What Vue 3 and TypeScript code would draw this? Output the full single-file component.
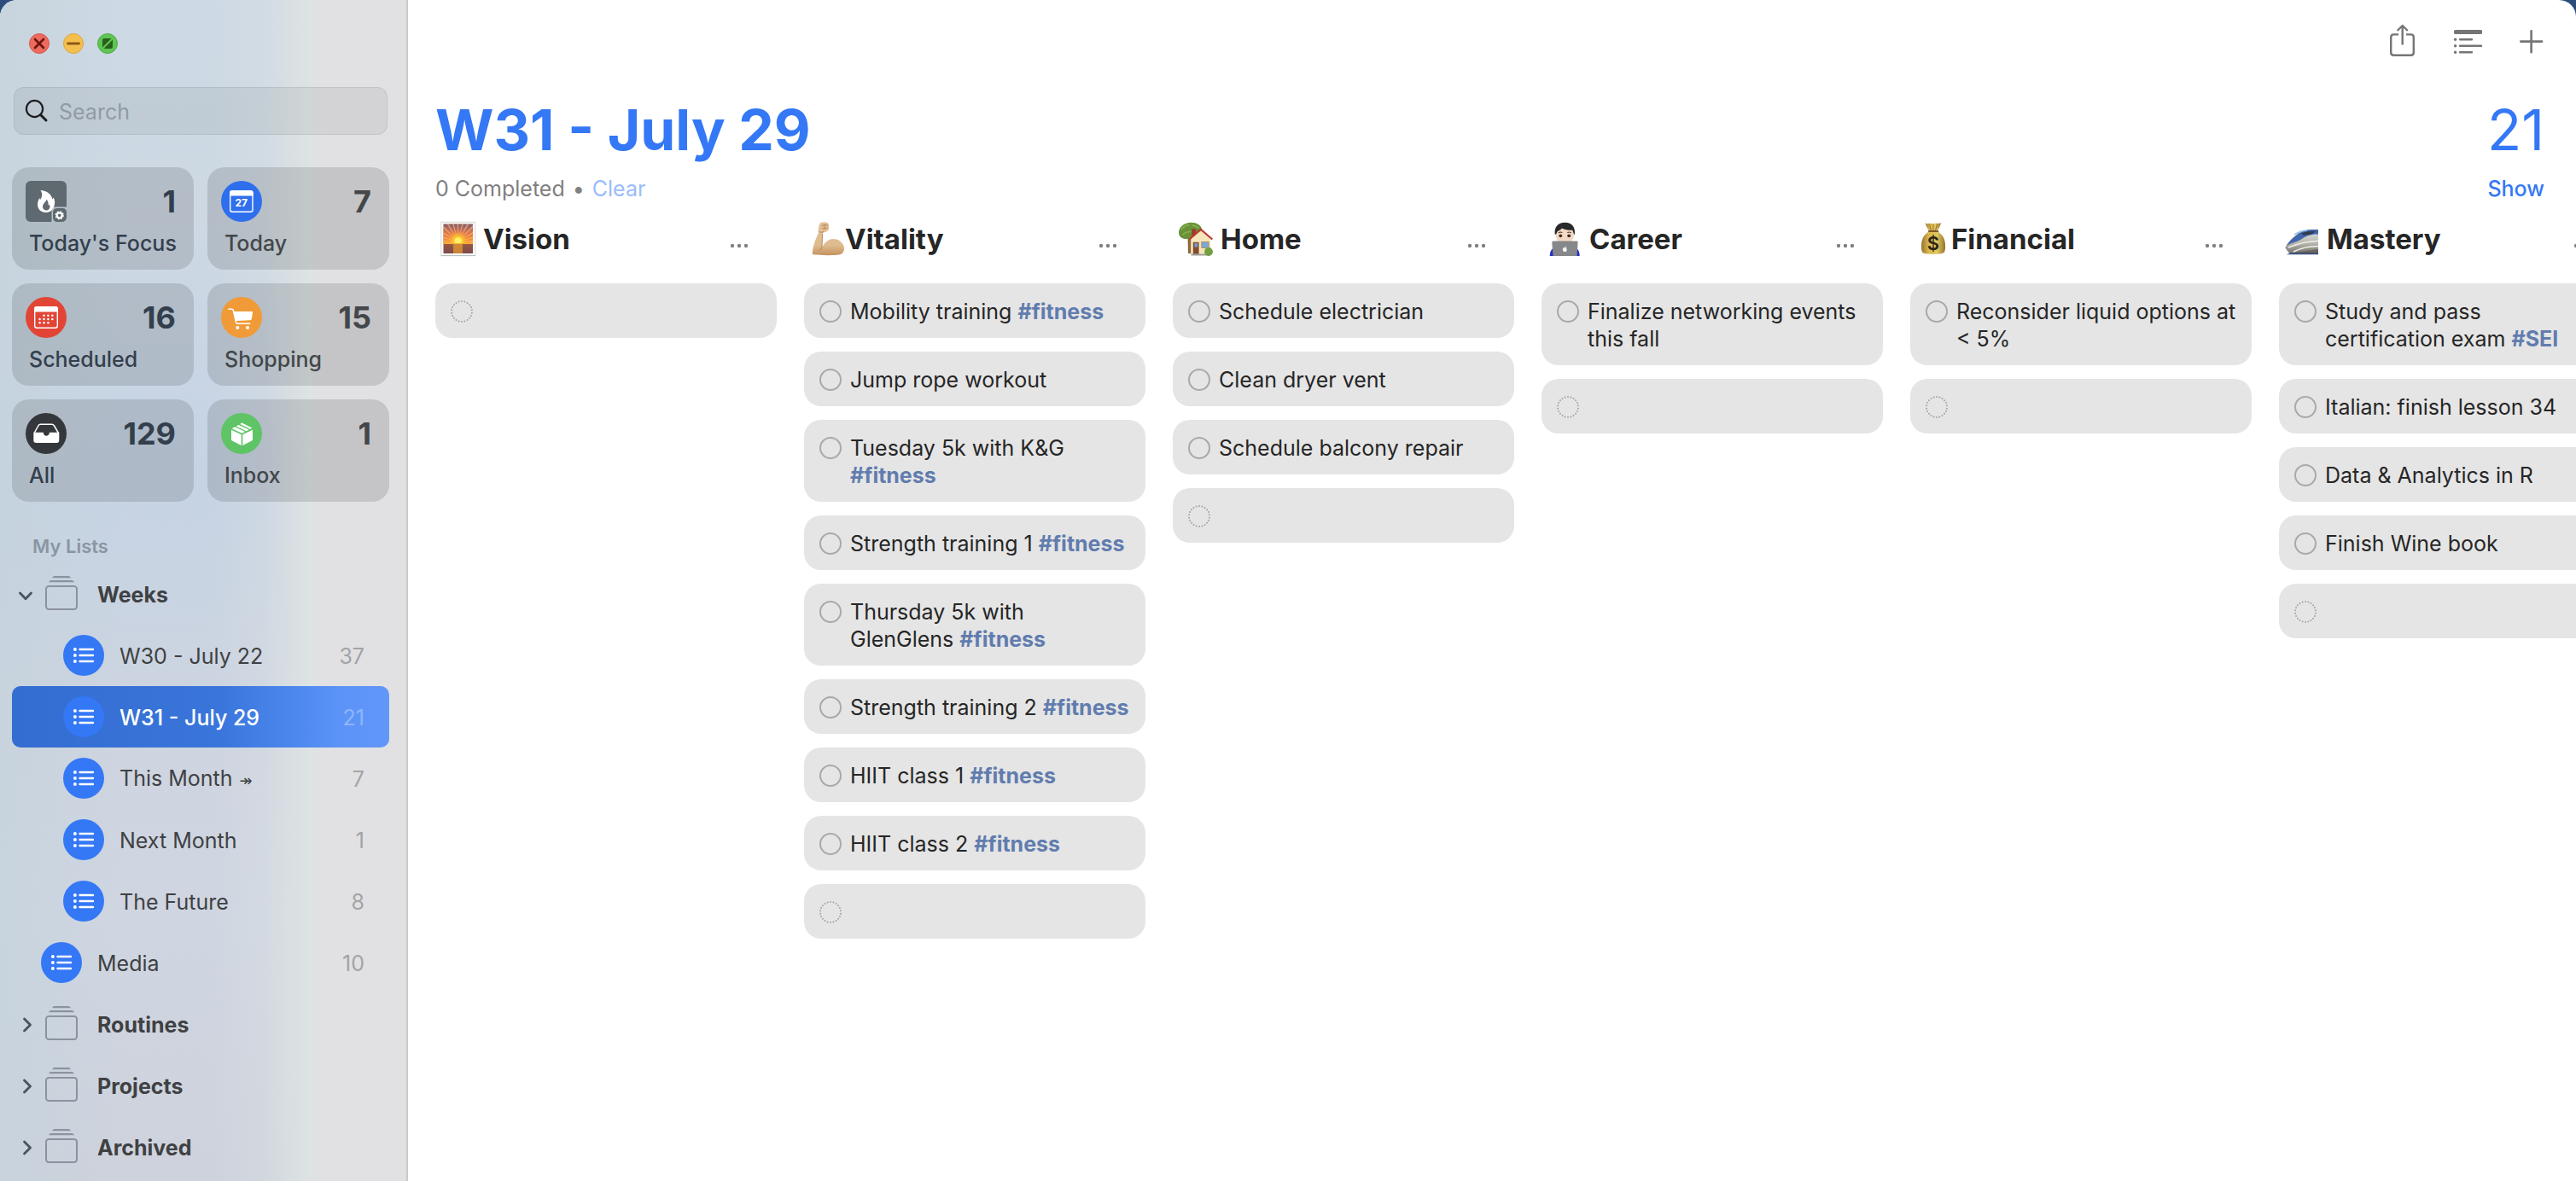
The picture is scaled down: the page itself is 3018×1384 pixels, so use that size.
<script setup lang="ts">
import { ref } from 'vue'

interface Tile {
  id: string
  label: string
  count: number
}

interface ListRow {
  kind: 'group' | 'list'
  label: string
  mark?: string
  count?: number
  nested?: boolean
  open?: boolean
}

interface Task {
  text: string
  tag?: string
}

interface Column {
  id: string
  title: string
  spaced: boolean
  tasks: Task[]
}

const search = ref('')
const selected = ref('W31 - July 29')

const tiles: Tile[] = [
  { id: 'focus', label: "Today's Focus", count: 1 },
  { id: 'today', label: 'Today', count: 7 },
  { id: 'scheduled', label: 'Scheduled', count: 16 },
  { id: 'shopping', label: 'Shopping', count: 15 },
  { id: 'all', label: 'All', count: 129 },
  { id: 'inbox', label: 'Inbox', count: 1 },
]

const rows: ListRow[] = [
  { kind: 'group', label: 'Weeks', open: true },
  { kind: 'list', label: 'W30 - July 22', count: 37, nested: true },
  { kind: 'list', label: 'W31 - July 29', count: 21, nested: true },
  { kind: 'list', label: 'This Month', mark: '↠', count: 7, nested: true },
  { kind: 'list', label: 'Next Month', count: 1, nested: true },
  { kind: 'list', label: 'The Future', count: 8, nested: true },
  { kind: 'list', label: 'Media', count: 10 },
  { kind: 'group', label: 'Routines' },
  { kind: 'group', label: 'Projects' },
  { kind: 'group', label: 'Archived' },
]

const columns: Column[] = [
  { id: 'vision', title: 'Vision', spaced: true, tasks: [] },
  {
    id: 'vitality',
    title: 'Vitality',
    spaced: false,
    tasks: [
      { text: 'Mobility training', tag: '#fitness' },
      { text: 'Jump rope workout' },
      { text: 'Tuesday 5k with K&G', tag: '#fitness' },
      { text: 'Strength training 1', tag: '#fitness' },
      { text: 'Thursday 5k with GlenGlens', tag: '#fitness' },
      { text: 'Strength training 2', tag: '#fitness' },
      { text: 'HIIT class 1', tag: '#fitness' },
      { text: 'HIIT class 2', tag: '#fitness' },
    ],
  },
  {
    id: 'home',
    title: 'Home',
    spaced: true,
    tasks: [
      { text: 'Schedule electrician' },
      { text: 'Clean dryer vent' },
      { text: 'Schedule balcony repair' },
    ],
  },
  { id: 'career', title: 'Career', spaced: true, tasks: [{ text: 'Finalize networking events this fall' }] },
  { id: 'financial', title: 'Financial', spaced: false, tasks: [{ text: 'Reconsider liquid options at < 5%' }] },
  {
    id: 'mastery',
    title: 'Mastery',
    spaced: true,
    tasks: [
      { text: 'Study and pass certification exam', tag: '#SEI' },
      { text: 'Italian: finish lesson 34' },
      { text: 'Data & Analytics in R' },
      { text: 'Finish Wine book' },
    ],
  },
]

// Dots of the ring that marks a blank reminder
const ringDots = Array.from({ length: 22 }, (_, i) => {
  const a = (i / 22) * Math.PI * 2
  return { x: 13 + 12 * Math.sin(a), y: 13 - 12 * Math.cos(a) }
})

// Day marks in the Scheduled calendar: the first week starts late, the last ends early
const dayDots = [
  [21.5, 21.7], [26.4, 21.7], [31.3, 21.7],
  [16.6, 26], [21.5, 26], [26.4, 26], [31.3, 26],
  [16.6, 30.3], [21.5, 30.3], [26.4, 30.3],
]

const rays = Array.from({ length: 13 }, (_, i) => {
  const a = Math.PI + (i / 12) * Math.PI
  return {
    d: `M20.5 24 L${20.5 + 40 * Math.cos(a - 0.04)} ${24 + 40 * Math.sin(a - 0.04)} L${20.5 + 40 * Math.cos(a + 0.04)} ${24 + 40 * Math.sin(a + 0.04)}Z`,
  }
})
</script>

<template>
  <div class="window">
    <aside class="sidebar">
      <div class="lights">
        <button type="button" aria-label="Close">
          <svg viewBox="0 0 24 24"><circle cx="12" cy="12" r="11.5" fill="#ed6a5f" stroke="#d9564a" /><path d="M7 7l10 10M17 7L7 17" stroke="#6d150d" stroke-width="2.6" stroke-linecap="round" /></svg>
        </button>
        <button type="button" aria-label="Minimize">
          <svg viewBox="0 0 24 24"><circle cx="12" cy="12" r="11.5" fill="#f5bf4f" stroke="#dba63b" /><path d="M5.500 12h13" stroke="#8f5a16" stroke-width="2.8" stroke-linecap="round" /></svg>
        </button>
        <button type="button" aria-label="Zoom">
          <svg viewBox="0 0 24 24"><circle cx="12" cy="12" r="11.500" fill="#61c554" stroke="#50ad43" /><path d="M6 16.500V8q0-2 2-2h8.500zM18 7.500V16q0 2-2 2H7.500z" fill="#285f1d" /></svg>
        </button>
      </div>

      <label class="search">
        <svg viewBox="0 0 28 28" aria-hidden="true"><circle cx="11.500" cy="11.500" r="9.600" fill="none" stroke="#1d1d1f" stroke-width="2.200" /><path d="M18.500 18.500l6.500 6.500" stroke="#1d1d1f" stroke-width="3" stroke-linecap="round" /></svg>
        <input v-model="search" type="search" placeholder="Search" aria-label="Search" />
      </label>

      <nav class="tiles" aria-label="Smart lists">
        <button v-for="t in tiles" :key="t.id" type="button" class="tile">
          <span class="tile-top">
            <svg v-if="t.id === 'focus'" viewBox="0 0 48 48">
              <rect width="48" height="48" rx="6" fill="#5f6970" />
              <path d="M17.500 11c7 .3 12.500 4.500 14 10.500.6-.6.900-1.300 1-2.200 2 3 2 7 1 10.200C32 34.500 28 37 23.800 37 17.500 37 14 32.500 14 27.500c0-3 1.200-5 2.200-7.500.6.800.7 1.500.8 2.200 2-3.200 3.500-6.700.5-11.200z" fill="#fff" />
              <path d="M24.500 21.500c0 2.500-4.500 5-4.500 9 0 2.300 2 4 4.200 4s4.300-1.500 4.300-4.200c0-1.300-.4-2-.9-2.800-.3.600-.6 1-1.100 1.200.5-2.700-.2-5-2-7.200z" fill="#5f6970" />
              <path d="M30.500 48V36q0-5.500 5.500-5.500h12V48z" fill="#b7c2cd" />
              <path d="M32 42v-5q0-5 5-5h6q5 0 5 5v5q0 6-6 6h-5q-5 0-5-6z" fill="#5f6970" />
              <circle cx="39.700" cy="40.300" r="3" fill="none" stroke="#fff" stroke-width="2.200" />
              <circle cx="39.700" cy="40.300" r="4.400" fill="none" stroke="#fff" stroke-width="1.600" stroke-dasharray="1.800 1.656" />
            </svg>
            <svg v-else-if="t.id === 'today'" viewBox="0 0 48 48">
              <circle cx="24" cy="24" r="24" fill="#2f6fee" />
              <rect x="10.700" y="12" width="26.300" height="24.300" rx="2.500" fill="none" stroke="#fff" stroke-width="1.400" />
              <path d="M10 17.500V14q0-3 3-3h21.700q3 0 3 3v3.500z" fill="#fff" />
              <text x="23.800" y="30" text-anchor="middle" font-size="12" font-weight="700" fill="#fff">27</text>
            </svg>
            <svg v-else-if="t.id === 'scheduled'" viewBox="0 0 48 48">
              <circle cx="24" cy="24" r="24" fill="#e24536" />
              <rect x="10.700" y="12" width="26.600" height="24.300" rx="2.500" fill="none" stroke="#fff" stroke-width="1.400" />
              <path d="M10 17.500V14q0-3 3-3h22q3 0 3 3v3.500z" fill="#fff" />
              <circle v-for="(d, i) in dayDots" :key="i" :cx="d[0]" :cy="d[1]" r="1.300" fill="#fff" />
            </svg>
            <svg v-else-if="t.id === 'shopping'" viewBox="0 0 48 48">
              <circle cx="24" cy="24" r="24" fill="#f19a38" />
              <path d="M8.800 14.300h4q1.200 0 1.500 1.300l3.200 14q.3 1.600 1.900 1.600h14.400" fill="none" stroke="#fff" stroke-width="1.600" stroke-linecap="round" stroke-linejoin="round" />
              <path d="M14.800 17h21.400q1 0 .9 1l-1.200 7.500q-.3 1.700-2 1.800l-16.500.8z" fill="#fff" />
              <circle cx="19.300" cy="36" r="2.100" fill="#fff" /><circle cx="31" cy="36" r="2.100" fill="#fff" />
            </svg>
            <svg v-else-if="t.id === 'all'" viewBox="0 0 48 48">
              <circle cx="24" cy="24" r="24" fill="#34373b" />
              <path d="M10.100 23.500l5-9q.7-1.300 2.200-1.300h13.600q1.500 0 2.300 1.300l5.300 9" fill="none" stroke="#fff" stroke-width="1.500" stroke-linejoin="round" />
              <path d="M9.300 22.800h11.500c.2 2.600 1.500 4 3.500 4s3.400-1.400 3.600-4h11.400V32q0 3-3 3h-24q-3 0-3-3z" fill="#fff" />
            </svg>
            <svg v-else viewBox="0 0 48 48">
              <circle cx="24" cy="24" r="24" fill="#5fc466" />
              <path d="M12 19.800l11.700 5.400V38L13 32.500q-1-.5-1-1.600zM37 19.800l-11.700 5.400V38L36 32.500q1-.5 1-1.600z" fill="#fff" />
              <path d="M12.500 18.300l3.800-2 11.800 5.600-3.600 1.800zM17.700 15.500l3-1.600 12 5.600-3.200 1.700zM22.200 13l2.300-1.500L36.500 17.700l-2.400 1.100z" fill="#fff" />
            </svg>
            <strong>{{ t.count }}</strong>
          </span>
          <span class="tile-label">{{ t.label }}</span>
        </button>
      </nav>

      <h2 class="lists-title">My Lists</h2>
      <ul class="lists">
        <li v-for="r in rows" :key="r.label">
          <a
            href="#"
            class="row"
            :class="{ nested: r.nested, group: r.kind === 'group', selected: r.label === selected }"
            @click.prevent="selected = r.label"
          >
            <span class="chevron">
              <svg v-if="r.kind === 'group'" viewBox="0 0 20 20" aria-hidden="true">
                <path v-if="r.open" d="M3.500 9l6.500 6.700L16.500 9" />
                <path v-else d="M8.500 4l7 7-7 7" />
              </svg>
            </span>
            <svg v-if="r.kind === 'group'" class="row-icon" viewBox="0 0 48 48" aria-hidden="true">
              <rect x="6" y="15" width="36" height="27" rx="3.200" fill="none" stroke="#8b939f" stroke-width="2" />
              <path d="M9 10.200q1-2.200 3-2.200h24q2 0 3 2.200zM13 5.200q1-2.200 3-2.200h16q2 0 3 2.200z" fill="#8b939f" />
            </svg>
            <svg v-else class="row-icon" viewBox="0 0 48 48" aria-hidden="true">
              <circle cx="24" cy="24" r="24" fill="#3478f6" />
              <path d="M19.500 17h15.500M19.500 24h15.500M19.500 31h15.500" stroke="#fff" stroke-width="2.400" stroke-linecap="round" />
              <g fill="#fff"><circle cx="13.900" cy="17" r="2" /><circle cx="13.900" cy="24" r="2" /><circle cx="13.900" cy="31" r="2" /></g>
            </svg>
            <span class="row-label">{{ r.label }}<small v-if="r.mark">{{ r.mark }}</small></span>
            <span class="row-count">{{ r.count }}</span>
          </a>
        </li>
      </ul>
    </aside>

    <main class="main">
      <div class="toolbar">
        <button type="button" aria-label="Share">
          <svg viewBox="0 0 36 40"><path d="M13 12.400H7.500q-3.300 0-3.300 3.300v17.700q0 3.300 3.300 3.300h20q3.300 0 3.300-3.300V15.700q0-3.300-3.300-3.300H22M17.700 2.500v22M11.600 8l6.100-6 6.100 6" fill="none" stroke="#757575" stroke-width="2.400" stroke-linejoin="round" /></svg>
        </button>
        <button type="button" aria-label="View options">
          <svg viewBox="0 0 36 40"><rect x="2" y="7" width="33" height="5" rx="1.500" fill="#757575" /><path d="M9 18.300h14M9 25.700h25M9 33.300h14" stroke="#757575" stroke-width="2.400" stroke-linecap="round" /><g fill="#757575"><circle cx="3.600" cy="18.300" r="1.700" /><circle cx="3.600" cy="25.700" r="1.700" /><circle cx="3.600" cy="33.300" r="1.700" /></g></svg>
        </button>
        <button type="button" aria-label="New reminder">
          <svg viewBox="0 0 36 40"><path d="M16.600 8.200v25M4.300 20.600h24.800" stroke="#757575" stroke-width="2.600" stroke-linecap="round" /></svg>
        </button>
      </div>

      <header class="header">
        <div class="title-line">
          <h1>W31 - July 29</h1>
          <span class="total">21</span>
        </div>
        <div class="status-line">
          <span>0 Completed</span><span class="bullet">•</span><button type="button" class="clear">Clear</button>
          <button type="button" class="show">Show</button>
        </div>
      </header>

      <div class="board">
        <section v-for="c in columns" :key="c.id" class="column">
          <div class="column-head" :class="{ spaced: c.spaced }">
            <svg v-if="c.id === 'vision'" class="emoji" viewBox="0 0 42 42" aria-hidden="true">
              <defs>
                <linearGradient id="sky" x1="0" y1="0" x2="0" y2="1"><stop offset="0" stop-color="#7c5c74" /><stop offset=".45" stop-color="#e0764a" /><stop offset="1" stop-color="#fba02e" /></linearGradient>
                <linearGradient id="sea" x1="0" y1="0" x2="0" y2="1"><stop offset="0" stop-color="#c8742c" /><stop offset="1" stop-color="#7d4a4b" /></linearGradient>
                <radialGradient id="glow"><stop offset="0" stop-color="#fff7a0" /><stop offset=".35" stop-color="#ffd530" /><stop offset="1" stop-color="#ffa52e" stop-opacity="0" /></radialGradient>
                <clipPath id="skyclip"><rect x="3.500" y="3.500" width="34.500" height="23" /></clipPath>
              </defs>
              <rect x=".8" y="1.300" width="40" height="39.400" fill="#fff" stroke="#d0d9d9" stroke-width="1" />
              <path d="M.8 40.500h40.300" stroke="#b4c0bf" stroke-width="1" />
              <rect x="3.500" y="3.500" width="34.500" height="34.500" fill="url(#sea)" />
              <g clip-path="url(#skyclip)">
                <rect x="3.500" y="3.500" width="34.500" height="23" fill="url(#sky)" />
                <path v-for="(r, i) in rays" :key="i" :d="r.d" fill="#ffc27a" opacity=".6" />
                <circle cx="20.700" cy="23.500" r="12" fill="url(#glow)" />
                <circle cx="20.700" cy="23.500" r="4" fill="#fff06a" />
              </g>
              <rect x="15" y="26.500" width="11" height="11.500" fill="#e39a32" opacity=".75" />
              <path d="M3.500 26.500h34.500" stroke="#f6b13a" stroke-width="1" />
            </svg>
            <svg v-else-if="c.id === 'vitality'" class="emoji" viewBox="0 0 42 42" aria-hidden="true">
              <defs><linearGradient id="skin" x1="0" y1="0" x2="0" y2="1"><stop offset="0" stop-color="#e3bf96" /><stop offset=".7" stop-color="#dfbb90" /><stop offset="1" stop-color="#c4935f" /></linearGradient></defs>
              <path d="M11 14C10.500 10 11 5 13 2.200 16 .6 21 1 22.600 3c1 2 .3 5 .2 7.200-1.800 3.200-6.600 2.300-7.300 5.200L15 31c2.500-5 7-9.700 13-10 7 0 12.500 5 13 10.500 0 4.500-2 7-5 7.800-10 1.500-23 .7-32.300-.3C4 31 7 22 11 14z" fill="url(#skin)" />
              <path d="M15.500 15.400L15 31c-.6 1.600-1.600 2.700-3 3.500M11.800 12.500c2 1.500 4 1 5-.2M15 5.500c2-1.500 4.500-1.300 6.500-.3M15.500 8.500c2 .8 4 .5 6-.5M17.500 4.500l1 4.500" fill="none" stroke="#b28052" stroke-width=".9" stroke-linecap="round" />
            </svg>
            <svg v-else-if="c.id === 'home'" class="emoji" viewBox="0 0 42 42" aria-hidden="true">
              <path d="M11.500 17l.5 21h3.500V17z" fill="#8d6a38" />
              <path d="M1 13.500C1 7 7.500 1.700 15.500 1.700c6.500 0 12 3.300 12.500 8 .3 5-6 8-12.500 9.500-2.500 2.400-8 2.400-11 .6C2 18.500 1 16 1 13.500z" fill="#679238" />
              <path d="M4 10q4-5 9-5.500M6 15.500q5-3.500 10-3M17 5q4 .5 7 3" stroke="#83ad4c" stroke-width="1.800" fill="none" stroke-linecap="round" />
              <rect x="16" y="9.300" width="5" height="9" fill="#9c3d31" />
              <path d="M15.500 21L26.700 11.500l11.500 10V38.500H15.500z" fill="#f5e5ba" />
              <path d="M13.500 21.500L26.700 9.700 40.300 21.500" fill="none" stroke="#bd3a31" stroke-width="2.300" />
              <rect x="17.800" y="24.800" width="6.800" height="14" fill="#87492e" /><rect x="19.500" y="26" width="3.700" height="4.500" fill="#6b9dcd" />
              <rect x="27.800" y="24.500" width="8.300" height="7" fill="#79a9d8" stroke="#b78a58" stroke-width=".9" /><path d="M15.500 39.500h22" stroke="#9b9a94" stroke-width="2" />
              <circle cx="36" cy="36" r="4.900" fill="#749e42" />
            </svg>
            <svg v-else-if="c.id === 'career'" class="emoji" viewBox="0 0 42 42" aria-hidden="true">
              <path d="M3.700 41c.3-5 1.500-8.500 6-10h23.500c4 1.500 5.300 5 5.500 10z" fill="#2630c4" />
              <ellipse cx="21.300" cy="16" rx="10.800" ry="11.200" fill="#f2d9c4" />
              <path d="M9.800 16C8.500 7.500 13 1.700 21.500 1.700S34 7.500 32.800 16c-1.300-.5-1.500-4-2.800-5.500-5 .8-9.500-.6-12-2-2 2.500-4.500 3-5.600 4-.6 1.500-.8 3-2.600 3.500z" fill="#29282a" />
              <circle cx="16.300" cy="17.300" r="1.900" fill="#3e2a20" /><circle cx="26.200" cy="17.300" r="1.900" fill="#3e2a20" />
              <path d="M13.800 13.800q2.400-1.400 4.500-.3M24.300 13.500q2.300-1 4.500.3" stroke="#3e2a20" stroke-width="1" fill="none" />
              <path d="M6.300 25q0-1.400 1.500-1.400h27.400q1.400 0 1.400 1.400L35.500 41H7.500z" fill="#858789" />
              <path d="M19.600 31.500q1.200-.8 1.800-.1.900-.8 2.100.1-.8 1.500.4 2.600-.8 2.100-2 1.800-.5-.2-1 0c-1.800.3-2.800-3.200-1.300-4.400z" fill="#f6f6f6" /><circle cx="22.200" cy="30.200" r=".6" fill="#f6f6f6" />
            </svg>
            <svg v-else-if="c.id === 'financial'" class="emoji" viewBox="0 0 42 42" aria-hidden="true">
              <defs><linearGradient id="bag"><stop offset="0" stop-color="#987231" /><stop offset=".3" stop-color="#d8b84f" /><stop offset=".65" stop-color="#e2c960" /><stop offset="1" stop-color="#95702d" /></linearGradient></defs>
              <path d="M11.600 2.500q3 1.500 5-.1 3.800 1.200 7.500 0 3 1 6-.2-1.300 5-4.500 9.500h-9.200Q13 7.500 11.600 2.500z" fill="url(#bag)" />
              <path d="M16.500 3.500l2 7.500M21 3.500V11M25.500 3.500l-2 7.500" stroke="#94692b" stroke-width=".9" />
              <path d="M16 12.500h10c4 2 8 6.500 8.800 13 .6 5 .5 9-1.300 11.500-3.500 2.500-21.500 2.500-25 0C6.800 34.500 6.800 30.500 7.300 25.500 8 19 12 14.500 16 12.500z" fill="url(#bag)" />
              <path d="M16 12h10.300" stroke="#7e5a24" stroke-width="2.200" stroke-linecap="round" />
              <text x="20.800" y="33.500" text-anchor="middle" font-size="22" font-weight="600" fill="#2c2517">$</text>
            </svg>
            <svg v-else class="emoji" viewBox="0 0 42 42" aria-hidden="true">
              <defs><linearGradient id="train" x1="0" y1="0" x2="0" y2="1"><stop offset="0" stop-color="#dfe3e4" /><stop offset=".55" stop-color="#b9b8b0" /><stop offset="1" stop-color="#6f6c66" /></linearGradient></defs>
              <path d="M1.300 31C6 22 17 12 27 10.500c5-.6 9-.6 13-.5v29H7c-1.500-3-4.700-5-5.700-8z" fill="url(#train)" />
              <path d="M3 28.500C9 20 18 12 27 10.500c5-.6 9-.6 13-.5v5.500c-9-.2-14.500 2-20 6-5 3-11 4-17 7z" fill="#4166ac" />
              <path d="M20 14.500c5-2.300 10-3 17-2.300-3 3-8 3.500-11.500 4.300-3 0-5-.5-5.500-2z" fill="#303b4d" />
              <path d="M12 16q7-4.500 15-5" stroke="#8fbbe6" stroke-width="1.400" fill="none" />
              <path d="M5 31c10-4 20-7.500 35-7.500M11 36c9-4.500 18-6.500 29-6.500" stroke="#f0f0ec" stroke-width="1.500" fill="none" />
              <path d="M2.500 39.300q5-2.600 12-2.300l25.500-.3v2.600z" fill="#3a4f82" /><path d="M14 36.500l26-3.500v5H14z" fill="#5b5954" opacity=".65" />
            </svg>
            <h3>{{ c.title }}</h3>
            <button type="button" class="more" :aria-label="'More options for ' + c.title">
              <svg viewBox="0 0 32 42"><g fill="#808080"><circle cx="8" cy="29" r="2.200" /><circle cx="16" cy="29" r="2.200" /><circle cx="24" cy="29" r="2.200" /></g></svg>
            </button>
          </div>

          <div class="cards">
            <label v-for="t in c.tasks" :key="t.text" class="card">
              <span class="check">
                <input type="checkbox" />
                <svg viewBox="0 0 26 26" aria-hidden="true"><circle cx="13" cy="13" r="12" fill="none" stroke="#a9a9a9" stroke-width="2" /></svg>
              </span>
              <span class="card-text">{{ t.text }}<template v-if="t.tag">{{ ' ' }}<b>{{ t.tag }}</b></template></span>
            </label>
            <div class="card">
              <span class="check">
                <input type="checkbox" :aria-label="'Blank reminder in ' + c.title" />
                <svg viewBox="0 0 26 26" aria-hidden="true"><circle v-for="(d, i) in ringDots" :key="i" :cx="d.x" :cy="d.y" r="1" fill="#a4a4a4" /></svg>
              </span>
              <input class="card-input" type="text" :aria-label="'New reminder in ' + c.title" />
            </div>
          </div>
        </section>
      </div>
    </main>
  </div>
</template>

<style>
body {
  margin: 0;
  background: #2b4d7c;
}
</style>

<style scoped>
* {
  box-sizing: border-box;
}
.window {
  display: flex;
  min-height: 100vh;
  border-radius: 20px 20px 0 0;
  overflow: hidden;
  background: #fff;
  color: #262626;
  font-family: Inter, 'Noto Sans', 'DejaVu Sans', sans-serif;
  font-size: 25px;
  line-height: 32px;
}
button {
  padding: 0;
  border: 0;
  background: none;
  color: inherit;
  font: inherit;
  text-align: left;
}
svg {
  display: block;
}
h1,
h2,
h3,
ul {
  margin: 0;
  padding: 0;
}

/* Sidebar */
.sidebar {
  flex: none;
  width: 478px;
  padding: 39px 20px 0 14px;
  border-right: 2px solid #c9cacc;
  background:
    linear-gradient(90deg, rgba(221, 226, 227, 0) 52%, rgba(221, 226, 227, 0.3) 65%, #dde3e3 76%, #e1e1e3 80%, #e1e1e3),
    linear-gradient(90deg, rgba(197, 211, 220, 0.7), rgba(197, 211, 220, 0) 30%),
    linear-gradient(180deg, #cdd9e4, #cdd8e3 18%, #c6d3e4 40%, #c9d4e2 50%, #ced4e0 62%, #cfd6e1 78%, #ced2dc);
}
.lights {
  display: flex;
  gap: 16px;
  margin-left: 20px;
}
.lights svg {
  width: 24px;
  height: 24px;
}
.search {
  display: flex;
  align-items: center;
  gap: 12px;
  height: 56px;
  margin: 39px 2px 0;
  padding: 0 12px;
  border: 1px solid rgba(0, 0, 0, 0.08);
  border-radius: 12px;
  background: rgba(0, 0, 0, 0.06);
}
.search svg {
  flex: none;
  width: 28px;
  height: 28px;
}
.search input {
  flex: 1;
  min-width: 0;
  padding: 2px 0 0;
  border: 0;
  outline: 0;
  background: none;
  color: #262626;
  font: inherit;
}
.search input::placeholder {
  color: #919ba5;
  opacity: 1;
}
.tiles {
  display: grid;
  grid-template-columns: repeat(2, minmax(0, 1fr));
  gap: 16px;
  margin-top: 38px;
}
.tile {
  display: flex;
  flex-direction: column;
  gap: 9px;
  height: 120px;
  padding: 16px 21px 0 16px;
  border-radius: 20px;
  background: rgba(0, 0, 0, 0.12);
  color: #333f4d;
}
.tile:nth-child(even) {
  color: #43474a;
}
.tile-top {
  display: flex;
  justify-content: space-between;
  align-items: center;
}
.tile-top svg {
  width: 48px;
  height: 48px;
}
.tile-top strong {
  font-size: 36px;
  font-weight: 700;
}
.tile-label {
  padding-left: 4px;
  font-weight: 500;
  white-space: nowrap;
}
.lists-title {
  margin: 36px 0 4px 24px;
  color: #8a95a3;
  font-size: 22px;
  font-weight: 600;
  line-height: 32px;
}
.lists {
  list-style: none;
}
.row {
  display: flex;
  align-items: center;
  height: 72px;
  padding: 0 29px 0 6px;
  border-radius: 10px;
  color: #3f4143;
  text-decoration: none;
}
.chevron {
  width: 28px;
}
.nested .chevron {
  width: 54px;
}
.chevron svg {
  width: 20px;
  height: 20px;
  fill: none;
  stroke: #4a5360;
  stroke-width: 2.8;
  stroke-linecap: round;
  stroke-linejoin: round;
}
.row-icon {
  width: 48px;
  height: 48px;
}
.row-label,
.row-count {
  padding-top: 2px;
}
.row-label {
  flex: 1;
  margin-left: 18px;
}
.row-label small {
  margin-left: 8px;
  font-size: 18px;
}
.row-count {
  color: #a2a4a6;
}
.group .row-label {
  font-weight: 700;
}
.selected {
  background: linear-gradient(90deg, #346dd0, #3a75db 55%, #4d89ef 76%, #5b93f8 86%, #6297f8);
  color: #fff;
  font-weight: 500;
}
.selected .row-count {
  color: #8fb6fb;
  font-weight: 400;
}

/* Main pane */
.main {
  flex: 1;
  min-width: 0;
  padding-left: 32px;
}
.toolbar {
  display: flex;
  justify-content: flex-end;
  align-items: flex-start;
  gap: 40px;
  height: 112px;
  padding: 28px 33px 0 0;
}
.toolbar svg {
  width: 36px;
  height: 40px;
}
.header {
  padding-right: 37px;
  color: #3478f6;
}
.title-line {
  display: flex;
  justify-content: space-between;
  height: 93px;
  font-size: 66px;
  line-height: 80px;
}
h1 {
  font-size: 66px;
  font-weight: 700;
}
.status-line {
  display: flex;
  color: #808080;
}
.bullet {
  margin: 0 9px;
}
.clear {
  color: #9abcfb;
}
.show {
  margin-left: auto;
  color: #3478f6;
  font-weight: 500;
}
.board {
  display: flex;
  gap: 32px;
  overflow: hidden;
  padding-top: 22px;
}
.column {
  flex: none;
  width: 400px;
}
.column-head {
  display: flex;
  align-items: center;
  height: 42px;
  margin-bottom: 31px;
  padding: 0 28px 0 6px;
}
.emoji {
  flex: none;
  width: 42px;
  height: 42px;
}
h3 {
  font-size: 33px;
  font-weight: 700;
}
.spaced h3 {
  margin-left: 8px;
}
.more {
  margin-left: auto;
}
.more svg {
  width: 32px;
  height: 42px;
}
.cards {
  display: flex;
  flex-direction: column;
  gap: 16px;
}
.card {
  display: flex;
  gap: 10px;
  padding: 17px 16px 15px 18px;
  border-radius: 20px;
  background: #e5e5e5;
}
.check {
  display: grid;
  flex: none;
  width: 26px;
  height: 26px;
  margin-top: 3px;
}
.check > * {
  grid-area: 1 / 1;
  width: 26px;
  height: 26px;
  margin: 0;
}
.check input {
  opacity: 0;
}
.card-text b {
  color: #617cae;
  font-weight: 700;
}
.card-input {
  flex: 1;
  min-width: 0;
  height: 32px;
  padding: 0;
  border: 0;
  outline: 0;
  background: none;
  font: inherit;
}
</style>
